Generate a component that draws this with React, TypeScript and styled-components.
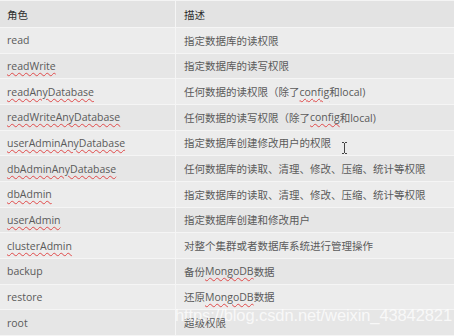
import React from "react";
import styled, { createGlobalStyle } from "styled-components";

const Global = createGlobalStyle`
  html, body { margin: 0; padding: 0; background: #ebebeb; }
  body { width: 454px; height: 336px; overflow: hidden; }
`;

const Page = styled.div`
  position: relative;
  width: 454px;
  height: 336px;
  overflow: hidden;
  background: #ebebeb;
  font-family: "Open Sans", "Noto Sans CJK SC", sans-serif;
  font-size: 10.5px;
`;

const Table = styled.div`
  display: grid;
  grid-template-columns: 176px 1fr;
  grid-template-rows: 27px repeat(12, 25.67px);
  border-top: 1px solid #f4f4f4;
`;

const Cell = styled.div<{ $head?: boolean; $shade?: boolean; $first?: boolean }>`
  box-sizing: border-box;
  display: flex;
  align-items: center;
  padding-left: ${(p) => (p.$first ? "7px" : "8px")};
  border-bottom: 1px solid #f5f5f5;
  border-right: ${(p) => (p.$first ? "1px solid #f5f5f5" : "none")};
  background: ${(p) => (p.$head ? "#e3e3e3" : p.$shade ? "#e6e6e6" : "#ececec")};
  color: ${(p) => (p.$head ? "#2e2e2e" : "#5a5a5a")};
  white-space: nowrap;
`;

const Spell = styled.span`
  text-decoration: underline wavy #e04a4a;
  text-decoration-thickness: 1px;
  text-underline-offset: 2px;
`;

const Watermark = styled.div`
  position: absolute;
  left: 175px;
  top: 306px;
  font-family: "Liberation Sans", Arial, sans-serif;
  font-size: 16.5px;
  letter-spacing: -0.1px;
  color: rgba(255, 255, 255, 0.75);
  white-space: nowrap;
  pointer-events: none;
`;

const Cursor = styled.svg`
  position: absolute;
  left: 341px;
  top: 142px;
`;

type Row = { role: React.ReactNode; desc: React.ReactNode };

const rows: Row[] = [
  { role: "read", desc: "指定数据库的读权限" },
  { role: <Spell>readWrite</Spell>, desc: "指定数据库的读写权限" },
  {
    role: <Spell>readAnyDatabase</Spell>,
    desc: (
      <>
        任何数据的读权限（除了<Spell>config</Spell>和local)
      </>
    ),
  },
  {
    role: <Spell>readWriteAnyDatabase</Spell>,
    desc: (
      <>
        任何数据的读写权限（除了<Spell>config</Spell>和local)
      </>
    ),
  },
  { role: <Spell>userAdminAnyDatabase</Spell>, desc: "指定数据库创建修改用户的权限" },
  { role: <Spell>dbAdminAnyDatabase</Spell>, desc: "任何数据库的读取、清理、修改、压缩、统计等权限" },
  { role: <Spell>dbAdmin</Spell>, desc: "指定数据库的读取、清理、修改、压缩、统计等权限" },
  { role: <Spell>userAdmin</Spell>, desc: "指定数据库创建和修改用户" },
  { role: <Spell>clusterAdmin</Spell>, desc: "对整个集群或者数据库系统进行管理操作" },
  {
    role: "backup",
    desc: (
      <>
        备份<Spell>MongoDB</Spell>数据
      </>
    ),
  },
  {
    role: "restore",
    desc: (
      <>
        还原<Spell>MongoDB</Spell>数据
      </>
    ),
  },
  { role: "root", desc: "超级权限" },
];

export default function App() {
  return (
    <Page>
      <Global />
      <Table>
        <Cell $head $first>角色</Cell>
        <Cell $head>描述</Cell>
        {rows.map((r, i) => (
          <React.Fragment key={i}>
            <Cell $first $shade={i % 2 === 1}>{r.role}</Cell>
            <Cell $shade={i % 2 === 1}>{r.desc}</Cell>
          </React.Fragment>
        ))}
      </Table>
      <Cursor width="7" height="12" viewBox="0 0 7 12">
        <path d="M1 0.5h2M4 0.5h2M1 11.5h2M4 11.5h2M3.5 1v10" stroke="#444" strokeWidth="1" fill="none" />
      </Cursor>
      <Watermark>https://blog.csdn.net/weixin_43842821</Watermark>
    </Page>
  );
}
